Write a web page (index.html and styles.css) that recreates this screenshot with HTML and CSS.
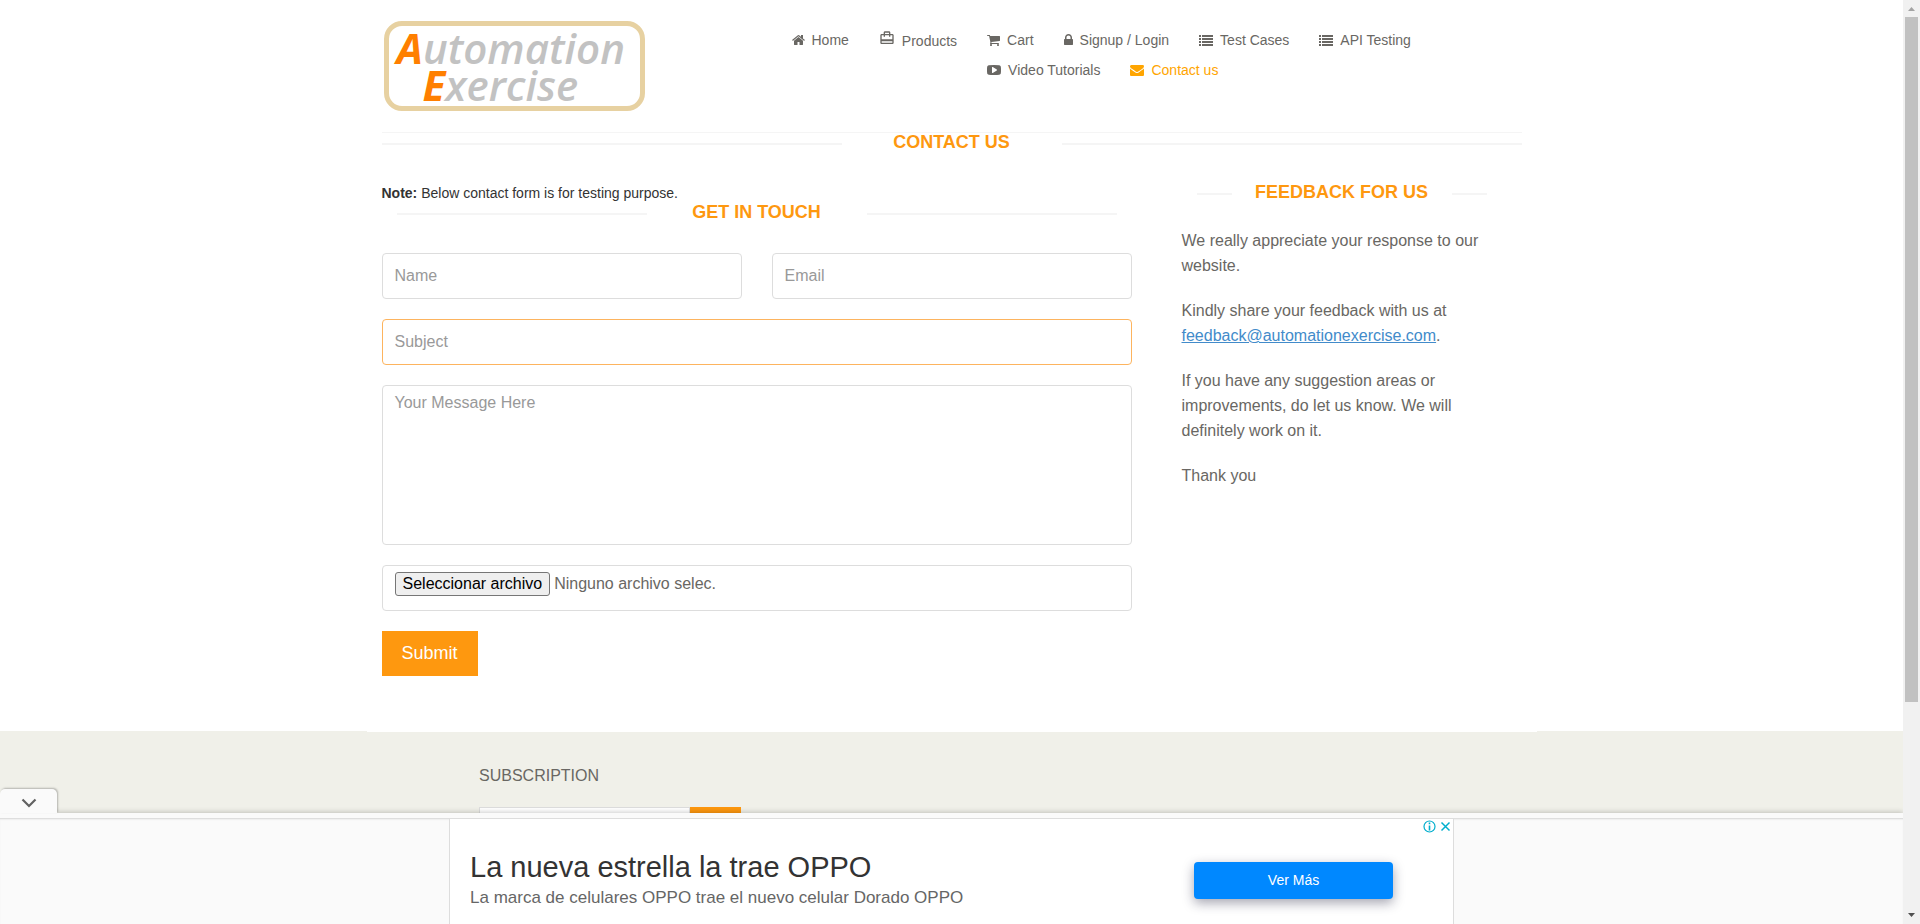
FILE: index.html
```html
<!DOCTYPE html>
<html lang="es">
<head>
<meta charset="utf-8">
<title>Automation Exercise - Contact Us</title>
<link rel="stylesheet" href="styles.css">
</head>
<body>
<div class="page">
  <header class="container header">
    <a class="logo" href="#"><span class="logo-line"><b>A</b>utomation</span><span class="logo-line logo-second"><b>E</b>xercise</span></a>
    <nav class="nav">
      <ul class="nav-list">
        <li><a href="#"><svg width="13" height="14" viewBox="64 0 1664 1792"><path d="M1472 992v480q0 26-19 45t-45 19h-384v-384h-256v384h-384q-26 0-45-19t-19-45v-480q0-1 .5-3t.5-3l575-474 575 474q1 2 1 6zm223-69l-62 74q-8 9-21 11h-3q-13 0-21-7l-692-577-692 577q-12 8-24 7-13-2-21-11l-62-74q-8-10-7-23.5t11-21.5l719-599q32-26 76-26t76 26l244 204v-195q0-14 9-23t23-9h192q14 0 23 9t9 23v408l219 182q10 8 11 21.5t-7 23.5z"/></svg>Home</a></li>
        <li><a class="products" href="#"><svg width="16" height="16" viewBox="0 0 24 24"><path d="M20 6h-3V4c0-1.1-.9-2-2-2H9c-1.1 0-2 .9-2 2v2H4c-1.1 0-2 .9-2 2v11c0 1.1.9 2 2 2h16c1.1 0 2-.9 2-2V8c0-1.1-.9-2-2-2zM9 4h6v2H9V4zm11 15H4v-2h16v2zm0-5H4V8h3v2h2V8h6v2h2V8h3v6z"/></svg>Products</a></li>
      </ul>
      <ul class="nav-list nav-rest">
        <li><a href="#"><svg width="13" height="14" viewBox="64 0 1664 1792"><path d="M704 1536q0 52-38 90t-90 38-90-38-38-90 38-90 90-38 90 38 38 90zm896 0q0 52-38 90t-90 38-90-38-38-90 38-90 90-38 90 38 38 90zm128-1088v512q0 24-16.5 42.5t-40.5 21.5l-1044 122q13 60 13 70 0 16-24 64h920q26 0 45 19t19 45-19 45-45 19h-1024q-26 0-45-19t-19-45q0-11 8-31.5t16-36 21.5-40 15.5-29.5l-177-823h-204q-26 0-45-19t-19-45 19-45 45-19h256q16 0 28.5 6.5t19.5 15.5 13 24.5 8 26 5.5 29.5 4.5 26h1201q26 0 45 19t19 45z"/></svg>Cart</a></li>
        <li><a href="#"><svg width="9" height="14" viewBox="320 0 1152 1792"><path d="M640 768h512v-192q0-106-75-181t-181-75-181 75-75 181v192zm832 96v576q0 40-28 68t-68 28h-960q-40 0-68-28t-28-68v-576q0-40 28-68t68-28h32v-192q0-184 132-316t316-132 316 132 132 316v192h32q40 0 68 28t28 68z"/></svg>Signup / Login</a></li>
        <li><a href="#"><svg width="14" height="14" viewBox="0 0 14 14"><path d="M0 2h2v2H0zM3 2h11v2H3zM0 5h2v2H0zM3 5h11v2H3zM0 8h2v2H0zM3 8h11v2H3zM0 11h2v2H0zM3 11h11v2H3z"/></svg>Test Cases</a></li>
        <li><a href="#"><svg width="14" height="14" viewBox="0 0 14 14"><path d="M0 2h2v2H0zM3 2h11v2H3zM0 5h2v2H0zM3 5h11v2H3zM0 8h2v2H0zM3 8h11v2H3zM0 11h2v2H0zM3 11h11v2H3z"/></svg>API Testing</a></li>
        <li><a href="#"><svg width="14" height="14" viewBox="0 0 1792 1792"><path d="M1280 896q0-37-30-54l-512-320q-31-20-65-2-33 18-33 56v640q0 38 33 56 16 8 31 8 20 0 34-10l512-320q30-17 30-54zm512 0q0 96-1 150t-8.500 136.500-22.500 147.500q-16 73-69 123t-124 58q-222 25-671 25t-671-25q-71-8-124.500-58t-69.500-123q-14-65-21.500-147.500t-8.500-136.500-1-150 1-150 8.500-136.500 22.500-147.500q16-73 69-123t124-58q222-25 671-25t671 25q71 8 124.500 58t69.500 123q14 65 21.500 147.500t8.500 136.500 1 150z"/></svg>Video Tutorials</a></li>
        <li><a class="active" href="#"><svg width="14" height="14" viewBox="0 0 1792 1792"><path d="M1792 710v794q0 66-47 113t-113 47h-1472q-66 0-113-47t-47-113v-794q44 49 101 87 362 246 497 345 57 42 92.500 65.500t94.500 48 110 24.500h2q51 0 110-24.500t94.500-48 92.500-65.500q170-123 498-345 57-39 100-87zm0-294q0 79-49 151t-122 123q-376 261-468 325-10 7-42.500 31t-54 38.500-52 32.500-57.500 27-50 9h-2q-23 0-50-9t-57.500-27-52-32.500-54-38.500-42.500-31q-91-64-262-182.500t-205-142.500q-62-42-117-115.500t-55-136.500q0-78 41.500-130t118.500-52h1472q65 0 112.500 47t47.500 113z"/></svg>Contact us</a></li>
      </ul>
    </nav>
  </header>

  <main class="container">
    <h2 class="title"><span>Contact us</span></h2>
    <div class="columns">
      <section class="contact">
        <p class="note"><b>Note:</b> Below contact form is for testing purpose.</p>
        <h2 class="title title-inset"><span>Get in touch</span></h2>
        <form class="form">
          <div class="form-row">
            <input class="field" type="text" placeholder="Name" aria-label="Name">
            <input class="field" type="email" placeholder="Email" aria-label="Email">
          </div>
          <input class="field field-active" type="text" placeholder="Subject" aria-label="Subject">
          <textarea class="field message" placeholder="Your Message Here" aria-label="Your Message Here"></textarea>
          <label class="field file"><input class="file-input" type="file"><span class="file-button">Seleccionar archivo</span><span>Ninguno archivo selec.</span></label>
          <button class="submit" type="button">Submit</button>
        </form>
      </section>
      <aside class="feedback">
        <h2 class="title title-inset"><span>Feedback for us</span></h2>
        <p>We really appreciate your response to our website.</p>
        <p>Kindly share your feedback with us at <a href="mailto:feedback@automationexercise.com">feedback@automationexercise.com</a>.</p>
        <p>If you have any suggestion areas or improvements, do let us know. We will definitely work on it.</p>
        <p>Thank you</p>
      </aside>
    </div>
  </main>

  <footer class="footer">
    <div class="footer-cap"></div>
    <div class="subscription">
      <h2>Subscription</h2>
      <form class="subscribe">
        <input type="email" aria-label="Subscription email">
        <button type="button" aria-label="Subscribe"></button>
      </form>
    </div>
  </footer>
</div>

<div class="anchor-ad">
  <button class="ad-toggle" type="button" aria-label="Collapse ad"><svg width="16" height="10" viewBox="0 0 16 10"><path d="M1.500 1.500L8 8l6.500-6.500" fill="none" stroke="#616161" stroke-width="2.200"/></svg></button>
  <div class="ad-strip"></div>
  <div class="ad-body">
    <div class="ad">
      <div class="ad-copy">
        <div class="ad-title">La nueva estrella la trae OPPO</div>
        <div class="ad-text">La marca de celulares OPPO trae el nuevo celular Dorado OPPO</div>
      </div>
      <button class="ad-button" type="button">Ver Más</button>
      <div class="ad-choices"><svg width="30" height="15" viewBox="0 0 30 15" fill="none" stroke="#00aecd"><circle cx="7.500" cy="7.500" r="5.500" stroke-width="1.200"/><path d="M7.500 6.500v5M7.500 3.500v1.800" stroke-width="1.600"/><path d="M19.500 3.500l8 8M27.500 3.500l-8 8" stroke-width="1.500"/></svg></div>
    </div>
  </div>
</div>

<div class="scrollbar">
  <svg width="17" height="17" viewBox="0 0 17 17"><path d="M5 11l3.500-4 3.500 4z" fill="#a3a3a3"/></svg>
  <div class="track"><div class="thumb"></div></div>
  <svg width="17" height="17" viewBox="0 0 17 17"><path d="M5 6l3.500 4L12 6z" fill="#505050"/></svg>
</div>
</body>
</html>
```

FILE: styles.css
```css
* { box-sizing: border-box; }

body {
  margin: 0;
  background: #fff;
  color: #696763;
  font: 16px/25px "Liberation Sans", Arial, sans-serif;
}

h2, p, ul { margin: 0; padding: 0; }

input, textarea, button { font: inherit; }

.page { margin-right: 17px; }

.container {
  max-width: 1140px;
  margin: 0 auto;
}

/* Header */
.header {
  display: flex;
  align-items: flex-start;
  height: 133px;
  padding-top: 21px;
  border-bottom: 1px solid #f5f5f5;
}

.logo {
  flex: none;
  width: 261px;
  height: 90px;
  margin: 0 132px 0 2px;
  padding: 3px 8px 0;
  border: 5px solid #e7d1a1;
  border-radius: 18px;
  color: #c2c2c2;
  font: italic 600 42px/37px "Open Sans", sans-serif;
  text-decoration: none;
  white-space: nowrap;
}

.logo b { color: #ff7f00; font-weight: 700; }

.logo-line { display: block; }

.logo-second { padding-left: 26px; }

.nav { display: flex; flex: 1; padding-top: 4px; }

.nav-list { display: flex; list-style: none; }

.nav-rest { flex: 1; flex-wrap: wrap; align-content: flex-start; }

.nav-list a {
  display: flex;
  align-items: center;
  gap: 7px;
  height: 30px;
  padding: 0 15px;
  color: #696763;
  font-size: 14px;
  text-decoration: none;
}

.nav-list svg { fill: currentColor; }

.nav-list .products { padding-top: 2px; }

.products svg { margin-bottom: 6px; }

.nav-list .active { color: #ffa500; }

/* Headings with a rule on each side */
.title {
  display: flex;
  align-items: flex-start;
  height: 20px;
  color: #fe980f;
  font-size: 18px;
  font-weight: 700;
  line-height: 18px;
  text-align: center;
  text-transform: uppercase;
}

.title span { flex: 0 0 220px; }

.title::before,
.title::after {
  content: "";
  flex: 1;
  height: 2px;
  margin-top: 10px;
  background: #f5f5f5;
}

.title-inset { padding: 0 15px; }

/* Contact */
.columns {
  display: flex;
  gap: 50px;
  padding: 30px 20px 55px 0;
}

.contact { flex: 1; }

.note { color: #333; font-size: 14px; line-height: 20px; }

.form {
  display: flex;
  flex-direction: column;
  align-items: flex-start;
  gap: 20px;
  margin-top: 30px;
}

.form-row { display: flex; gap: 30px; width: 100%; }

.field {
  display: block;
  width: 100%;
  min-width: 0;
  height: 46px;
  padding: 6px 12px;
  border: 1px solid #ddd;
  border-radius: 4px;
  background: #fff;
  color: #696763;
  outline: none;
}

.field::placeholder { color: #999; opacity: 1; }

.field-active { border-color: #fdb45e; }

.message { height: 160px; padding-top: 4px; resize: none; }

.file {
  display: flex;
  align-items: flex-start;
  gap: 4px;
  position: relative;
  line-height: 24px;
}

.file-input { position: absolute; opacity: 0; width: 1px; height: 1px; }

.file-button {
  padding: 0 7px;
  border: 1px solid #767676;
  border-radius: 3px;
  background: #efefef;
  color: #000;
  line-height: 22px;
}

.submit {
  height: 45px;
  padding: 0 20px;
  border: 0;
  background: #fe980f;
  color: #fff;
  font-size: 18px;
}

/* Feedback */
.feedback { flex: 0 0 320px; }

.feedback .title { margin-bottom: 25px; }

.feedback p { margin-bottom: 20px; }

.feedback a { color: #428bca; }

/* Footer */
.footer { padding-bottom: 80px; background: #f0f0e9; }

.footer-cap {
  max-width: 1170px;
  height: 1px;
  margin: 0 auto;
  background: #fff;
}

.subscription { max-width: 945px; margin: 0 auto; padding-top: 31px; }

.subscription h2 {
  font-size: 16px;
  font-weight: 400;
  text-transform: uppercase;
}

.subscribe { display: flex; margin-top: 19px; }

.subscribe input {
  width: 211px;
  height: 34px;
  border: 1px solid #ddd;
  background: #fff;
}

.subscribe button {
  width: 51px;
  height: 34px;
  border: 0;
  background: #fe980f;
}

/* Anchored advertisement */
.anchor-ad {
  position: fixed;
  right: 17px;
  bottom: 0;
  left: 0;
  background: #fafafa;
  box-shadow: 0 -1px 5px rgba(0, 0, 0, .2);
}

.ad-toggle {
  position: absolute;
  bottom: 100%;
  left: 0;
  width: 57px;
  height: 24px;
  padding: 4px 0 0;
  border: 0;
  border-radius: 5px 5px 0 0;
  background: #fafafa;
  box-shadow: 1px -1px 2px rgba(0, 0, 0, .25);
  line-height: 10px;
}

.ad-strip { height: 5px; }

.ad-body {
  padding: 0 20px;
  box-shadow: inset 0 2px 2px -1px rgba(0, 0, 0, .15);
}

.ad {
  display: flex;
  align-items: flex-start;
  justify-content: space-between;
  position: relative;
  max-width: 1005px;
  height: 106px;
  margin: 0 auto;
  padding: 33px 60px 0 20px;
  border: 1px solid #ddd;
  border-bottom: 0;
  background: #fff;
}

.ad-title { color: #333; font-size: 29px; line-height: 30px; }

.ad-text { color: #666; font-size: 17px; line-height: 32px; }

.ad-button {
  width: 199px;
  height: 37px;
  margin-top: 10px;
  border: 0;
  border-radius: 4px;
  background: #08f;
  box-shadow: 0 4px 12px rgba(30, 30, 60, .4);
  color: #fff;
  font-size: 14px;
}

.ad-choices {
  position: absolute;
  top: 0;
  right: 1px;
  line-height: 0;
}

/* Window scrollbar */
.scrollbar {
  display: flex;
  flex-direction: column;
  position: fixed;
  top: 0;
  right: 0;
  bottom: 0;
  width: 17px;
  background: #f1f1f1;
}

.track { flex: 1; padding: 0 2px; }

.thumb { height: 77%; background: #c1c1c1; }
```
